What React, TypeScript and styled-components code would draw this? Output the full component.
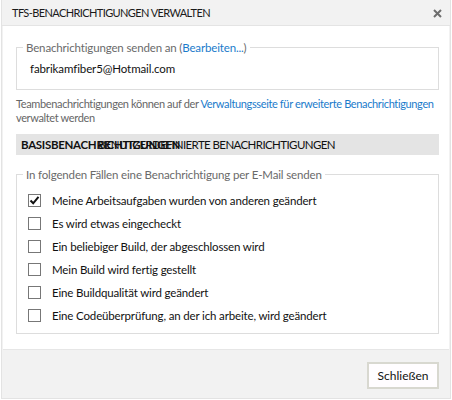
import * as React from 'react'
import styled, { createGlobalStyle } from 'styled-components';

const GlobalStyle = createGlobalStyle`
    html, body{
        margin: 0;
        padding: 0;
        background: #ffffff;
        font-family: Lato, "Open Sans", sans-serif;
    }
`;

interface IOption{
    label : string;
    checked : boolean;
}

const initialOptions : IOption[] = [
    { label: 'Meine Arbeitsaufgaben wurden von anderen geändert', checked: true },
    { label: 'Es wird etwas eingecheckt', checked: false },
    { label: 'Ein beliebiger Build, der abgeschlossen wird', checked: false },
    { label: 'Mein Build wird fertig gestellt', checked: false },
    { label: 'Eine Buildqualität wird geändert', checked: false },
    { label: 'Eine Codeüberprüfung, an der ich arbeite, wird geändert', checked: false },
];

export default function App() : React.ReactElement{

    /* State */
    const [options, setOptions] = React.useState<IOption[]>(initialOptions);

    /* Handlers */
    function toggleOption(index : number){
        setOptions(options.map((o, i) => i === index ? { ...o, checked: !o.checked } : o));
    }

    return (<>
        <GlobalStyle/>
        <Dialog>
            <Header>
                <Title>TFS-BENACHRICHTIGUNGEN VERWALTEN</Title>
                <CloseButton aria-label='Schließen'>
                    <svg width="9" height="9" viewBox="0 0 9 9">
                        <path d="M1 1 L8 8 M8 1 L1 8" stroke="#6d6d6d" strokeWidth="2"/>
                    </svg>
                </CloseButton>
            </Header>
            <Body>
                <Group $top={15}>
                    <Legend>Benachrichtigungen senden an (<Link>Bearbeiten...</Link>)</Legend>
                    <Email>fabrikamfiber5@Hotmail.com</Email>
                </Group>
                <Info>
                    Teambenachrichtigungen können auf der <Link>Verwaltungsseite für erweiterte Benachrichtigungen</Link> verwaltet werden
                </Info>
                <TabBar>
                    <Tab $active>BASISBENACHRICHTIGUNGEN</Tab>
                    <Tab>BENUTZERDEFINIERTE BENACHRICHTIGUNGEN</Tab>
                </TabBar>
                <Group $top={13}>
                    <Legend>In folgenden Fällen eine Benachrichtigung per E-Mail senden</Legend>
                    <OptionList>
                        {options.map((o, i) => (
                            <OptionRow key={o.label} onClick={() => toggleOption(i)}>
                                <Box>
                                    {o.checked &&
                                        <svg width="11" height="11" viewBox="0 0 11 11">
                                            <path d="M1.5 5.5 L4.2 8.3 L9.5 1.8" fill="none" stroke="#111" strokeWidth="2"/>
                                        </svg>}
                                </Box>
                                <span>{o.label}</span>
                            </OptionRow>
                        ))}
                    </OptionList>
                </Group>
            </Body>
            <Footer>
                <Button>Schließen</Button>
            </Footer>
        </Dialog>
    </>);
}

const Dialog = styled.div`
    width: 450px;
    height: 399px;
    margin-left: 1px;
    border: 1px solid #e3e3e3;
    border-top: none;
    box-sizing: border-box;
    display: flex;
    flex-direction: column;
    background: #f2f2f2;
`;

const Header = styled.div`
    height: 26px;
    display: flex;
    align-items: center;
    justify-content: space-between;
    padding: 0 8px 0 10px;
    background: #f2f2f2;
    border-bottom: 1px solid #e4e4e4;
    box-sizing: border-box;
`;

const Title = styled.div`
    font-size: 11px;
    color: #1a1a1a;
    letter-spacing: -0.6px;
`;

const CloseButton = styled.div`
    display: flex;
    align-items: center;
    padding-top: 1px;
`;

const Body = styled.div`
    background: #ffffff;
    margin: 0 1px;
    padding: 0 10px 0 13px;
    height: 324px;
    border-bottom: 1px solid #e6e6e6;
    box-sizing: border-box;
`;

const Group = styled.fieldset<{ $top: number }>`
    margin: ${p => p.$top}px 0 0 0;
    padding: 0 12px 7px 10px;
    border: 1px solid #dddddd;
    min-width: 0;
`;

const Legend = styled.legend`
    font-size: 11.5px;
    letter-spacing: -0.15px;
    color: #6a6a6a;
    padding: 0 3px;
    margin-left: -4px;
`;

const Link = styled.span`
    color: #1a7bcb;
    cursor: pointer;
`;

const Email = styled.div`
    font-size: 11.5px;
    letter-spacing: -0.1px;
    color: #111;
    padding: 8px 0 7px 3px;
`;

const Info = styled.div`
    font-size: 11px;
    letter-spacing: -0.36px;
    line-height: 14px;
    color: #666;
    margin-top: 7px;
`;

const TabBar = styled.div`
    margin-top: 9px;
    height: 21px;
    background: #e4e4e4;
    display: flex;
    align-items: center;
    padding-left: 5px;
    white-space: nowrap;
    overflow: hidden;
`;

const Tab = styled.span<{ $active?: boolean }>`
    font-size: 11.5px;
    letter-spacing: ${p => p.$active ? -0.3 : -0.6}px;
    color: #111;
    font-weight: ${p => p.$active ? 700 : 400};
    margin-left: ${p => p.$active ? 0 : -82}px;
`;

const OptionList = styled.div`
    display: flex;
    flex-direction: column;
    gap: 10px;
    padding: 13px 0 4px 1px;
`;

const OptionRow = styled.label`
    display: flex;
    align-items: center;
    gap: 11px;
    font-size: 11.5px;
    letter-spacing: -0.15px;
    color: #111;
    cursor: pointer;
`;

const Box = styled.span`
    width: 11px;
    height: 11px;
    border: 1px solid #777;
    display: flex;
    align-items: center;
    justify-content: center;
    background: #fff;
`;

const Footer = styled.div`
    flex: 1;
    display: flex;
    justify-content: flex-end;
    align-items: flex-start;
    padding: 12px 11px 0 0;
`;

const Button = styled.button`
    width: 72px;
    height: 27px;
    background: #fffdff;
    border: 2px solid #d8d8d0;
    font-family: Lato, "Open Sans", sans-serif;
    font-size: 12px;
    color: #111;
    padding: 0;
`;
